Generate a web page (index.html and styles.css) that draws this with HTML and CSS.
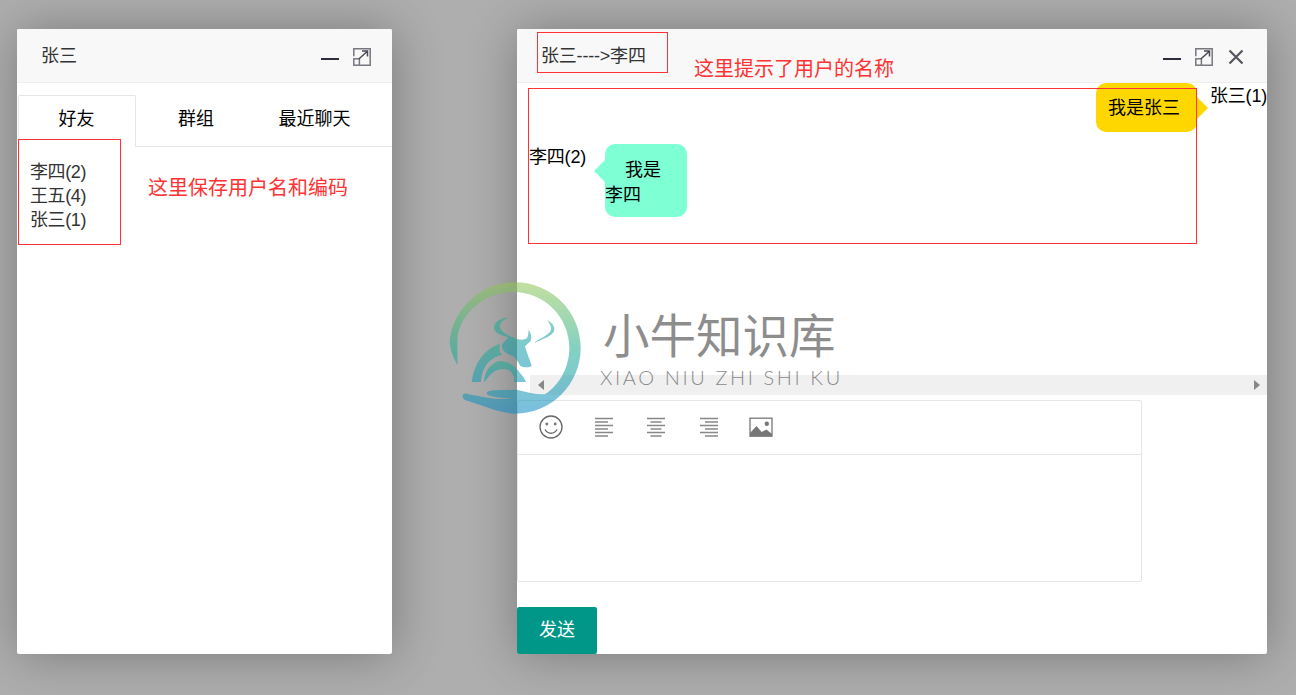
FILE: index.html
```html
<!DOCTYPE html>
<html lang="zh">
<head>
<meta charset="utf-8">
<title>小牛知识库</title>
<link rel="stylesheet" href="styles.css">
</head>
<body>
<svg class="defs" width="0" height="0" aria-hidden="true">
  <symbol id="i-max" viewBox="0 0 18 18"><g fill="none" stroke="#77777f" stroke-width="1.5"><path d="M.8 8.2V.8H17.2V17.2H7"/><rect x=".8" y="10.8" width="5.6" height="6.4"/></g><path d="M5.8 11 14.4 3.2M9 3h5.5v5.5" fill="none" stroke="#4a4a55" stroke-width="1.5"/></symbol>
  <symbol id="i-x" viewBox="0 0 16 16"><path d="M1.5 1.5 14.5 14.5M14.5 1.5 1.5 14.5" stroke="#55555f" stroke-width="2.2" fill="none"/></symbol>
</svg>

<section class="win win-list">
  <header class="bar">
    <span class="bar-title">张三</span>
    <span class="bar-tools">
      <i class="tool-min"></i>
      <svg class="tool-max"><use href="#i-max"/></svg>
    </span>
  </header>
  <ul class="tabs">
    <li class="tab tab-on">好友</li>
    <li class="tab tab-2">群组</li>
    <li class="tab tab-3">最近聊天</li>
  </ul>
  <ul class="friends">
    <li>李四(2)</li>
    <li>王五(4)</li>
    <li>张三(1)</li>
  </ul>
  <div class="mark mark-friends"></div>
  <p class="note note-friends">这里保存用户名和编码</p>
</section>

<section class="win win-chat">
  <header class="bar">
    <span class="bar-title bar-title-chat">张三----&gt;李四</span>
    <span class="bar-tools bar-tools-chat">
      <i class="tool-min"></i>
      <svg class="tool-max"><use href="#i-max"/></svg>
      <svg class="tool-x"><use href="#i-x"/></svg>
    </span>
  </header>
  <div class="mark mark-title"></div>
  <p class="note note-title">这里提示了用户的名称</p>

  <div class="messages">
    <div class="log">
      <div class="row row-me">
        <div class="bubble bubble-me">我是张三</div>
        <span class="who who-me">张三(1)</span>
      </div>
      <div class="row row-other">
        <span class="who">李四(2)</span>
        <div class="bubble bubble-other"><span class="indent"></span>我是<br>李四</div>
      </div>
    </div>
    <div class="hscroll"><i class="arrow-l"></i><i class="arrow-r"></i></div>
  </div>
  <div class="mark mark-log"></div>

  <div class="editor">
    <div class="toolbar">
      <svg class="ticon" viewBox="0 0 24 24"><circle cx="12" cy="12" r="11" fill="none" stroke="#666" stroke-width="1.3"/><circle cx="7.8" cy="9" r="1.4" fill="#777"/><circle cx="16.2" cy="9" r="1.4" fill="#777"/><path d="M6 14.5c2.8 5 9.2 5 12 0" fill="none" stroke="#666" stroke-width="1.3"/></svg>
      <svg class="ticon" viewBox="0 0 24 24"><path d="M3 3.5H21M3 7H16M3 10.5H21M3 14H16M3 17.5H21M3 21H16" stroke="#888" stroke-width="1.5" fill="none"/></svg>
      <svg class="ticon" viewBox="0 0 24 24"><path d="M3 3.5H21M6.5 7H17.5M3 10.5H21M6.5 14H17.5M3 17.5H21M6.5 21H17.5" stroke="#888" stroke-width="1.5" fill="none"/></svg>
      <svg class="ticon" viewBox="0 0 24 24"><path d="M3 3.5H21M8 7H21M3 10.5H21M8 14H21M3 17.5H21M8 21H21" stroke="#888" stroke-width="1.5" fill="none"/></svg>
      <svg class="ticon" viewBox="0 0 24 24"><rect x="1" y="3.2" width="22" height="18" fill="none" stroke="#777" stroke-width="1.3"/><path d="M1 21.2V18L7.5 11 12.7 17 17.5 14.5 23 19V21.2Z" fill="#777"/><circle cx="17.8" cy="8.8" r="2.2" fill="#777"/></svg>
    </div>
    <div class="editor-body"></div>
  </div>
  <button class="send">发送</button>
</section>

<div class="watermark">
  <svg class="wm-logo" viewBox="0 0 435 420">
    <defs>
      <linearGradient id="wm-ring" x1="0" y1="0" x2="0" y2="1">
        <stop offset="0" stop-color="#93c652"/>
        <stop offset=".5" stop-color="#1fad90"/>
        <stop offset="1" stop-color="#0d8ac6"/>
      </linearGradient>
      <linearGradient id="wm-bull" x1="0" y1="0" x2="0" y2="1">
        <stop offset="0" stop-color="#1fad90"/>
        <stop offset="1" stop-color="#1298b4"/>
      </linearGradient>
    </defs>
    <path fill="url(#wm-ring)" d="M38 262C25 240 15 215 14 190 24 90 110 13 210 13 319 13 407 101 407 210 407 319 319 407 210 407 170 407 120 385 62 367 48 360 50 345 65 347 95 352 150 368 200 362L175 360C150 358 125 354 125 346 125 338 145 336 175 336L215 335C240 340 270 350 300 349 345 320 373 265 373 210 373 117 298 42 205 42 112 42 37 117 37 190 37 215 37 240 38 262Z"/>
    <g fill="url(#wm-bull)">
      <path d="M190 118C160 122 142 138 149 155 155 170 175 172 190 178L172 198C168 210 172 222 205 235 215 245 222 255 225 263 235 268 250 270 260 264 255 245 245 225 240 205L256 190C262 178 258 165 251 155 250 165 250 172 246 180 238 188 215 186 205 178 185 172 162 158 165 142 168 130 180 125 190 118Z"/>
      <path d="M80 312C88 255 115 215 165 197 162 210 162 222 172 230 140 238 112 258 108 312Z"/>
      <path d="M118 312C118 285 130 262 158 250 180 245 210 262 225 285 235 295 240 305 243 312L206 312C212 300 205 285 190 275 165 268 145 278 132 295 126 302 122 308 120 312Z"/>
      <path d="M307 127C318 132 332 145 327 160 320 175 290 185 267 195 285 180 315 170 318 155 320 145 312 135 307 127Z"/>
    </g>
  </svg>
  <div class="wm-text">
    <div class="wm-cn">小牛知识库</div>
    <div class="wm-en">XIAO NIU ZHI SHI KU</div>
  </div>
</div>
</body>
</html>
```
FILE: styles.css
```css
* { box-sizing: border-box; }
html, body { margin: 0; height: 100%; }
body {
  position: relative;
  overflow: hidden;
  background: #aeaeae;
  font-family: "Liberation Sans", "Noto Sans CJK SC", sans-serif;
  font-size: 18px;
  color: #333;
}
.defs { position: absolute; }
ul { list-style: none; margin: 0; padding: 0; }
p { margin: 0; }

.win {
  position: absolute;
  top: 29px;
  height: 625px;
  background: #fff;
  border-radius: 2px;
  box-shadow: 1px 1px 50px rgba(0, 0, 0, .3);
}
.win-list { left: 17px; width: 375px; }
.win-chat { left: 517px; width: 750px; }

.bar {
  display: flex;
  align-items: center;
  justify-content: space-between;
  height: 54px;
  padding: 0 21px 0 24px;
  background: #f8f8f8;
  border-bottom: 1px solid #eee;
  border-radius: 2px 2px 0 0;
}
.bar-title { line-height: 50px; }
.bar-title-chat { letter-spacing: -.2px; }
.win-chat .bar { padding-right: 23px; }
.bar-tools { display: flex; align-items: center; gap: 14px; margin-top: 2px; }
.tool-min { display: block; width: 18px; height: 2px; margin-top: 4px; background: #2e2d3c; }
.tool-max { display: block; width: 18px; height: 18px; }
.tool-x { display: block; width: 16px; height: 16px; margin-left: 1px; }

.tabs { display: flex; height: 52px; margin: 12px 0 0 1px; border-bottom: 1px solid #e6e6e6; color: #000; }
.tab { line-height: 48px; text-align: center; }
.tab-on { width: 118px; height: 52px; padding-right: 1px; line-height: 46px; background: #fff; border: 1px solid #e6e6e6; border-bottom: 0; border-radius: 2px 2px 0 0; }
.tab-2 { width: 120px; }
.tab-3 { width: 117px; }

.friends { padding: 13px 0 0 13px; line-height: 24px; letter-spacing: -.4px; }

.mark { position: absolute; border: 1px solid #ff3333; pointer-events: none; }
.mark-friends { left: 1px; top: 110px; width: 103px; height: 106px; }
.mark-title { left: 20px; top: 3px; width: 131px; height: 41px; }
.mark-log { left: 11px; top: 59px; width: 669px; height: 156px; }
.note { position: absolute; font-size: 20px; line-height: 28px; color: #ff3333; white-space: nowrap; }
.note-friends { left: 131px; top: 145px; }
.note-title { left: 177px; top: 26px; }

.messages { display: flex; flex-direction: column; height: 312px; color: #000; }
.log { flex: 1; }
.row { display: flex; align-items: flex-start; line-height: 25px; }
.row-me { justify-content: flex-end; }
.row-other { margin: 12px 0 0 12px; gap: 19px; }
.who { margin-top: 1px; letter-spacing: -.2px; }
.who-me { margin-left: 13px; }
.bubble { position: relative; border-radius: 10px; }
.bubble::after { content: ""; position: absolute; top: 50%; margin-top: -11px; border: 11px solid transparent; }
.bubble-me { width: 101px; padding: 13px 12px 11px; background: #ffd700; white-space: nowrap; }
.bubble-me::after { left: 100%; border-left-color: #ffd700; border-right-width: 0; }
.bubble-other { width: 82px; height: 73px; padding-top: 14px; background: #7fffd4; }
.bubble-other::after { right: 100%; top: 27px; margin-top: -11px; border-right-color: #7fffd4; border-left-width: 0; }
.indent { display: inline-block; width: 20px; }

.hscroll { display: flex; align-items: center; justify-content: space-between; height: 20px; margin-left: 13px; padding: 0 7px 0 8px; background: #f0f0f0; }
.arrow-l { width: 0; height: 0; border: 5px solid transparent; border-left-width: 0; border-right: 6px solid #888; }
.arrow-r { width: 0; height: 0; border: 5px solid transparent; border-right-width: 0; border-left: 6px solid #888; }

.editor { width: 625px; height: 182px; margin-top: 5px; background: #fff; border: 1px solid #e6e6e6; border-radius: 2px; }
.toolbar { display: flex; align-items: center; gap: 28.5px; height: 54px; padding: 0 0 1px 21px; border-bottom: 1px solid #e6e6e6; }
.ticon { display: block; width: 24px; height: 24px; flex: none; }
.editor-body { height: 126px; }

.send { display: block; width: 80px; height: 47px; margin: 25px 0 0; padding: 0 0 5px; background: #009688; border: 0; border-radius: 2px; color: #fff; font: inherit; }

.watermark { position: absolute; left: 445px; top: 278px; display: flex; opacity: .55; pointer-events: none; }
.wm-logo { display: block; width: 145px; height: 140px; flex: none; }
.wm-text { margin-left: 10px; padding-top: 25px; color: #313131; }
.wm-cn { padding-left: 3px; font-family: "Noto Sans CJK SC", sans-serif; font-size: 46.5px; line-height: 60px; white-space: nowrap; }
.wm-en { margin-top: 2px; font-family: "Lato", sans-serif; font-weight: 300; font-size: 20px; line-height: 24px; letter-spacing: 2.6px; white-space: nowrap; }
```
